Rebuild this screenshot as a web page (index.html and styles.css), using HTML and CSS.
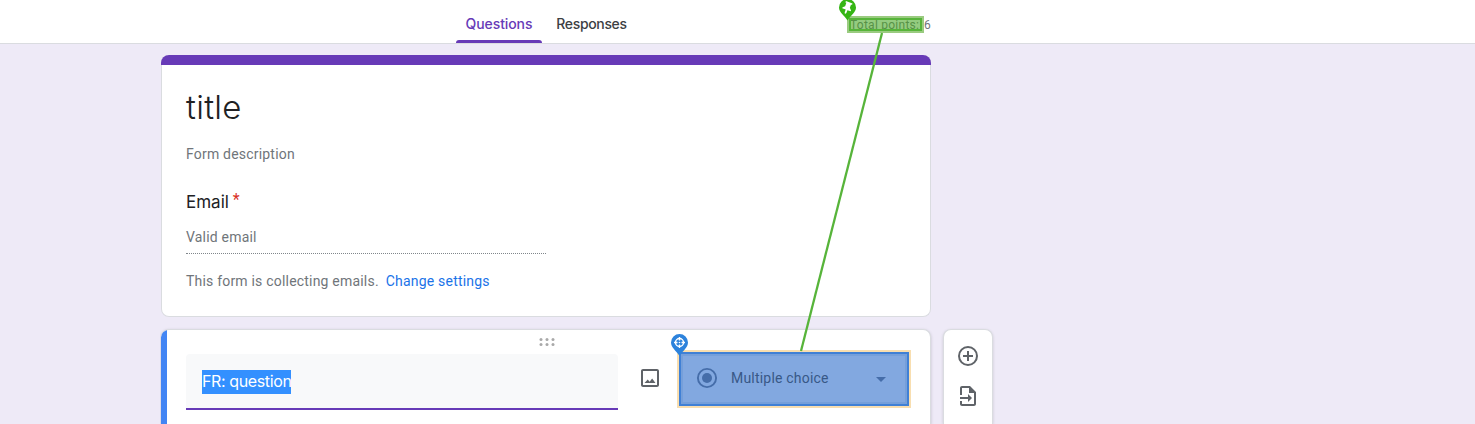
FILE: index.html
```html
<!DOCTYPE html>
<html lang="en">
<head>
<meta charset="utf-8">
<title>title</title>
<link rel="stylesheet" href="styles.css">
</head>
<body>
<header class="topbar">
  <nav class="tabs">
    <a class="tab tab-active">Questions</a>
    <a class="tab">Responses</a>
  </nav>
  <div class="points">Total points: <span class="points-value">6</span></div>
</header>
<main class="page">
  <section class="card intro">
    <h1 class="form-title">title</h1>
    <p class="description">Form description</p>
    <h2 class="email-label">Email <span class="required">*</span></h2>
    <p class="email-field">Valid email</p>
    <p class="collecting">This form is collecting emails.<a class="settings">Change settings</a></p>
  </section>
  <div class="row">
    <section class="card question">
      <svg class="drag" viewBox="0 0 16 8" width="16" height="8"><g fill="#a9a9a9"><circle cx="2" cy="1.500" r="1.500"/><circle cx="8" cy="1.500" r="1.500"/><circle cx="14" cy="1.500" r="1.500"/><circle cx="2" cy="6.500" r="1.500"/><circle cx="8" cy="6.500" r="1.500"/><circle cx="14" cy="6.500" r="1.500"/></g></svg>
      <div class="question-row">
        <div class="question-input"><span class="selection">FR: question</span></div>
        <svg class="image-icon" viewBox="0 0 24 24" width="24" height="24"><path fill="#5f6368" d="M19 5v14H5V5h14m0-2H5c-1.100 0-2 .9-2 2v14c0 1.100.9 2 2 2h14c1.100 0 2-.9 2-2V5c0-1.100-.9-2-2-2zm-4.860 9.500l-2.500 3.200-1.900-2.100L6.500 17h11z"/></svg>
        <div class="type-select">
          <svg viewBox="0 0 24 24" width="24" height="24"><circle cx="12" cy="12" r="9.100" fill="none" stroke="#456da9" stroke-width="1.900"/><circle cx="12" cy="12" r="5" fill="#456da9"/></svg>
          <span class="type-name">Multiple choice</span>
          <svg class="arrow" viewBox="0 0 10 5" width="10" height="5"><path fill="#456da9" d="M0 0h10L5 5z"/></svg>
        </div>
      </div>
    </section>
    <aside class="tools">
      <svg viewBox="0 0 24 24" width="24" height="24"><g fill="none" stroke="#5f6368" stroke-width="2"><circle cx="12" cy="12" r="9"/><path d="M12 7v10M7 12h10"/></g></svg>
      <svg viewBox="0 0 24 24" width="24" height="24"><path fill="#5f6368" d="M14 2H6C4.900 2 4 2.900 4 4v7h2V4h7v5h5v11H6v-3H4v3c0 1.100.9 2 2 2h12c1.100 0 2-.9 2-2V8zM12 18l4-4-4-4v3H4v2h8z"/></svg>
    </aside>
  </div>
</main>
<div class="points-highlight"></div>
<svg class="annotations" viewBox="0 0 1475 424" width="1475" height="424">
  <path d="M882 33L801 351" stroke="#57b43a" stroke-width="2.300" fill="none"/>
  <path fill="#35b514" d="M847.500 20.500C844 15 839 12.500 839 7.500a8.500 8.500 0 0 1 17 0C856 12.500 851 15 847.500 20.500z"/>
  <path fill="#fff" transform="rotate(20 847.500 7)" d="M844 2h7v1.500h-1V7l2 2v1h-3.500v3l-1 1.500-.8-1.500v-3H843V9l2-2V3.500h-1z"/>
  <path fill="#2c82dc" d="M679.500 356C676 350.500 671 347.500 671 342.500a8.500 8.500 0 0 1 17 0C688 347.500 683 350.500 679.500 356z"/>
  <g stroke="#fff" fill="none" stroke-width="1.400"><circle cx="679.500" cy="342.500" r="4"/><path d="M679.500 337v3.500M679.500 344.500v3.500M674 342.500h3.500M681.500 342.500h3.500"/></g><circle cx="679.500" cy="342.500" r=".8" fill="#fff"/>
</svg>
</body>
</html>
```
FILE: styles.css
```css
* { box-sizing: border-box; }
body {
  margin: 0;
  height: 424px;
  overflow: hidden;
  background: #eeeaf7;
  font-family: Roboto, "Liberation Sans", sans-serif;
  font-size: 14px;
  color: #70757a;
  position: relative;
}
h1, h2, p { margin: 0; font-weight: 400; }
svg { display: block; flex: none; }
.topbar {
  height: 44px;
  background: #fff;
  border-bottom: 1px solid #dadce0;
  display: flex;
  padding-left: 456px;
}
.tabs { display: flex; width: 394px; }
.tab {
  height: 43px;
  width: 86px;
  line-height: 48px;
  text-align: center;
  font-family: Inter, sans-serif;
  font-weight: 500;
  font-size: 14px;
  letter-spacing: -0.1px;
  color: #3c4043;
}
.tab + .tab { width: 99px; letter-spacing: -0.35px; }
.tab-active::after {
  content: "";
  display: block;
  height: 3px;
  margin-top: -8px;
  border-radius: 3px 3px 0 0;
  background: #673ab7;
}
.tab-active { color: #673ab7; }
.points { font-size: 12px; line-height: 50px; letter-spacing: 0.25px; width: 81px; display: flex; justify-content: space-between; white-space: nowrap; color: #70757a; }
.page { width: 840px; height: 380px; overflow: hidden; margin-left: 160px; padding: 11px 0 0 1px; }
.card { width: 770px; background: #fff; border: 1px solid #dadce0; border-radius: 8px; }
.intro { height: 262px; padding: 0 24px; border-top: 0; }
.intro::before {
  content: "";
  display: block;
  height: 10px;
  margin: 0 -25px 23px;
  border-radius: 8px 8px 0 0;
  background: #673ab7;
}
.form-title { font-family: Inter, sans-serif; font-weight: 300; font-size: 33px; line-height: 38px; letter-spacing: 0.3px; color: #202124; }
.description { line-height: 20px; margin-top: 18px; letter-spacing: 0.2px; }
.email-label { font-family: Inter, sans-serif; font-size: 17px; line-height: 24px; margin-top: 26px; color: #202124; }
.required { color: #d93025; margin-left: -1px; font-family: Roboto, sans-serif; font-size: 16px; position: relative; top: -3px; }
.email-field { width: 360px; height: 27px; line-height: 20px; margin-top: 12px; letter-spacing: 0.2px; border-bottom: 1px dotted #80868b; }
.collecting { line-height: 20px; margin-top: 17px; letter-spacing: 0.2px; }
.settings { color: #1a73e8; margin-left: 7px; }
.row { display: flex; gap: 12px; margin-top: 12px; }
.question {
  height: 95px;
  border-left: 0;
  border-bottom: 0;
  border-radius: 8px 8px 0 0;
  padding: 8px 20px 0 25px;
  background: linear-gradient(#4285f4, #4285f4) left / 6px 100% no-repeat, #fff;
  box-shadow: 0 1px 3px rgba(60, 64, 67, 0.25);
}
.drag { margin: 0 0 0 353px; }
.question-row { display: flex; margin-top: 3px; }
.question-input {
  width: 432px;
  height: 56px;
  margin-top: 5px;
  padding: 16px;
  background: #f8f9fa;
  border-bottom: 2px solid #673ab7;
  border-radius: 4px 4px 0 0;
}
.selection { display: inline-block; height: 24px; line-height: 23px; background: #3390ff; color: #fff; font-family: Inter, sans-serif; font-size: 16px; letter-spacing: -0.38px; white-space: nowrap; }
.image-icon { margin: 17px 0 0 20px; }
.type-select {
  width: 230px;
  height: 54px;
  margin: 3px 0 0 17px;
  padding: 0 21px 0 14px;
  display: flex;
  align-items: center;
  background: #82a8e0;
  border: 2px solid #4080d5;
  box-shadow: 0 0 0 2px #f8deb0, inset 0 0 0 2px #759fda;
}
.type-select > svg, .type-name { margin-top: -2px; }
.type-name { margin-left: 12px; color: #385887; letter-spacing: 0.2px; }
.type-select > .arrow { margin: 1px 0 0 auto; }
.tools {
  width: 50px;
  height: 95px;
  background: #fff;
  border: 1px solid #dadce0;
  border-bottom: 0;
  border-radius: 8px 8px 0 0;
  box-shadow: 0 1px 3px rgba(60, 64, 67, 0.2);
  display: flex;
  flex-direction: column;
  align-items: center;
  gap: 16px;
  padding-top: 14px;
}
.points-highlight {
  position: absolute;
  left: 847px;
  top: 16px;
  width: 77px;
  height: 17px;
  background: rgba(70, 165, 35, 0.58);
  border: 2px solid #9acb80;
  box-shadow: inset 0 0 0 2px #57b43a;
}
.annotations { position: absolute; left: 0; top: 0; }
```
